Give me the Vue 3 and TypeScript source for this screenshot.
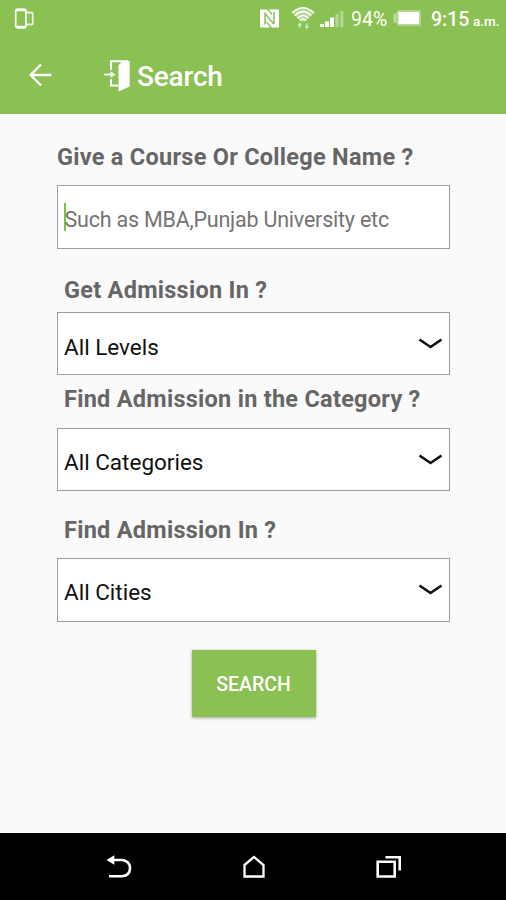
<script setup lang="ts">
import { ref } from 'vue'

interface Picker {
  id: string
  label: string
  value: string
}

const query = ref('')
const pickers: Picker[] = [
  { id: 'level', label: 'Get Admission In ?', value: 'All Levels' },
  { id: 'category', label: 'Find Admission in the Category ?', value: 'All Categories' },
  { id: 'city', label: 'Find Admission In ?', value: 'All Cities' },
]
</script>

<template>
  <div class="screen">
    <header class="top">
      <div class="status">
        <svg class="phone" width="20" height="22" viewBox="0 0 20 22" fill="none" stroke="#fff">
          <rect x="1.700" y="1.200" width="10.200" height="18.600" rx="2" stroke-width="1.700" />
          <path d="M2.500 2.200h9M2.500 18.800h9" stroke-width="2.200" />
          <path d="M12 4.500h5.500q1.300 0 1.300 1.300v9.400q0 1.300-1.300 1.300H12" stroke-width="1.800" stroke-opacity=".8" />
        </svg>
        <svg class="nfc" width="19" height="19" viewBox="0 0 19 19">
          <path fill="#fff" d="M0 .5h19v18H0z" />
          <path fill="none" stroke="#8bc053" stroke-width="1.500" d="M5 15.500V4.500l8.800 10.500M14 3v12" />
          <path fill="none" stroke="#8bc053" stroke-width="1.300" d="M7.500 0 12 5.500M6.500 13l5 6" />
        </svg>
        <svg class="wifi" width="24" height="24" viewBox="0 0 24 24" fill="none" stroke="#fff">
          <path d="M1 7Q12-3.500 23 7L14 15.500H10z" fill="#fff" fill-opacity=".4" stroke="none" />
          <path d="M1 7Q12-3.500 23 7M3.800 9.700Q12 1.500 20.200 9.700M6.500 12.300Q12 6.500 17.500 12.300M9 14.500Q12 11.500 15 14.500" stroke-width="1.500" />
          <path d="M8.800 22v-4.500M7.200 19.300l1.600-1.800 1.600 1.800M15.800 17.500V22M14.200 20.200l1.600 1.800 1.600-1.800" opacity=".6" stroke-width="1.500" />
        </svg>
        <svg class="signal" width="24" height="18" viewBox="0 0 24 18" fill="#fff">
          <path d="M0 14h4v3H0zM5 11.500h4V17H5zM10 7.500h4V17h-4z" />
          <path d="M15.500 4h3v13h-3zM20.300 1h3v16h-3z" opacity=".38" />
        </svg>
        <span class="percent">94%</span>
        <svg class="battery" width="28" height="16" viewBox="0 0 28 16">
          <path d="M4.500.7h22.800v14.600H4.500v-3H1V3.700h3.500z" fill="#fff" fill-opacity=".35" stroke="#fff" stroke-opacity=".3" />
          <path d="M5.500 2h20.500v12H5.500z" fill="#fff" />
        </svg>
        <span class="clock">9:15</span>
        <span class="meridiem">a.m.</span>
      </div>
      <div class="bar">
        <svg class="back" width="24" height="24" viewBox="0 0 24 24" fill="none" stroke="#fff" stroke-width="2.400">
          <path d="M12 1.500 1.700 12l10.300 10.500M2 12h20.500" />
        </svg>
        <svg class="door" width="28" height="34" viewBox="0 0 28 34">
          <path d="M7 11V2.200H24M7 20v6.500h7" fill="none" stroke="#fff" stroke-width="2" />
          <path d="M14.500 6 19 2h6.700v25.500L14.500 32.500z" fill="#fff" />
          <path d="M0 15.500h8" stroke="#fff" stroke-width="1.700" />
          <path d="M6.500 12 11.500 15.500 6.500 19z" fill="#fff" />
        </svg>
        <h1 class="title">Search</h1>
      </div>
    </header>

    <main class="form">
      <label class="label query-label" for="query">Give a Course Or College Name ?</label>
      <div class="box query-box">
        <span class="caret"></span>
        <input id="query" v-model="query" class="input" type="text" placeholder="Such as MBA,Punjab University etc" />
      </div>
      <template v-for="p in pickers" :key="p.id">
        <span class="label" :class="p.id + '-label'">{{ p.label }}</span>
        <div class="box select" :class="p.id + '-box'">
          <span class="value" :class="p.id + '-value'">{{ p.value }}</span>
          <svg class="chevron" width="24" height="12" viewBox="0 0 24 12" fill="none" stroke="#111" stroke-width="2.600">
            <path d="M1.500 1.500 12.500 9 23.500 1.500" />
          </svg>
        </div>
      </template>
      <button class="submit" type="button"><span class="submit-text">SEARCH</span></button>
    </main>

    <nav class="nav">
      <svg width="26" height="24" viewBox="0 0 26 24">
        <path d="M7 5h9q8 1 8 8.300T16 21.300H3" fill="none" stroke="#fff" stroke-width="2.600" />
        <path d="M.5 5 8.300.2v9.600z" fill="#fff" />
      </svg>
      <svg width="22" height="24" viewBox="0 0 22 24" fill="none" stroke="#fff" stroke-width="2.300">
        <path d="M1.500 10 11 1.900 20.500 10v11.500h-19z" />
      </svg>
      <svg width="26" height="24" viewBox="0 0 26 24" fill="none" stroke="#fff" stroke-width="2.600">
        <path d="M1.700 6.700h17v14.800h-17z" />
        <path d="M9.500 2.200h14.200v13.300" />
      </svg>
    </nav>
  </div>
</template>

<style>
body {
  margin: 0;
}
</style>

<style scoped>
.screen {
  display: flex;
  flex-direction: column;
  width: 506px;
  height: 900px;
  overflow: hidden;
  background: #fafafa;
  font-family: Roboto, "Liberation Sans", sans-serif;
}
.top {
  height: 114px;
  flex: none;
  background: #8bc053;
  color: #fff;
}
.status {
  display: flex;
  align-items: center;
  height: 38px;
  box-sizing: border-box;
  padding-left: 14px;
}
svg {
  display: block;
  flex: none;
}
.phone { margin-top: -1px; }
.nfc { margin-left: 226px; margin-top: -2px; }
.wifi { margin-left: 12px; margin-top: -3px; }
.signal { margin-left: 5px; }
.percent {
  width: 36px;
  margin-left: 7px;
  font-size: 19.5px;
  white-space: nowrap;
}
.battery { margin-left: 6px; margin-top: -2px; }
.clock {
  width: 38px;
  margin-left: 10px;
  font-size: 19.5px;
  font-weight: 500;
}
.meridiem {
  margin-left: 4px;
  margin-top: 4px;
  font-size: 13.5px;
  font-weight: 500;
}
.bar {
  display: flex;
  align-items: center;
  height: 76px;
  padding-left: 29px;
}
.back { margin-top: -2px; }
.door { margin-left: 51px; }
.title {
  margin: 1px 0 0 5px;
  font-size: 28px;
  line-height: 34px;
  font-weight: 500;
  letter-spacing: -0.2px;
}
.form {
  display: flex;
  flex-direction: column;
  flex: 1;
  padding: 29px 56px 0 57px;
}
.label {
  height: 28px;
  padding-left: 7px;
  color: #666;
  font-size: 23.5px;
  line-height: 28px;
  font-weight: 700;
  letter-spacing: 0.27px;
  white-space: nowrap;
}
.query-label { padding-left: 0; }
.level-label { margin-top: 27px; }
.category-label { margin-top: 10px; }
.city-label { margin-top: 25px; }
.box {
  display: flex;
  align-items: center;
  height: 63px;
  box-sizing: border-box;
  padding: 0 7px 0 6px;
  border: 1px solid #9c9c9c;
  background: #fff;
}
.query-box {
  height: 64px;
  margin-top: 14px;
  padding-top: 5px;
}
.level-box { margin-top: 8px; }
.category-box { margin-top: 15px; }
.city-box { margin-top: 14px; height: 64px; }
.caret {
  width: 2px;
  height: 28px;
  margin: -5px -2px 0 0;
  background: #7fc142;
}
.input {
  flex: 1;
  min-width: 0;
  padding: 0 0 0 0.5px;
  border: 0;
  outline: 0;
  background: transparent;
  font-family: inherit;
  font-size: 21.5px;
  letter-spacing: -0.22px;
}
.input::placeholder {
  color: #747474;
  opacity: 1;
}
.select { justify-content: space-between; }
.value {
  padding-top: 6px;
  color: #111;
  font-size: 22.5px;
  line-height: 28px;
}
.category-value, .city-value { padding-top: 4px; }
.submit {
  align-self: center;
  width: 124px;
  height: 67px;
  margin-top: 28px;
  padding: 2px 0 0;
  border: 0;
  background: #8bc053;
  color: #fff;
  font-family: inherit;
  font-size: 19.5px;
  font-weight: 500;
  box-shadow: 0 1px 3px rgba(0, 0, 0, .35);
}
.nav {
  display: flex;
  align-items: center;
  justify-content: center;
  gap: 111px;
  flex: none;
  box-sizing: border-box;
  height: 67px;
  padding-left: 2px;
  background: #000;
}
</style>
